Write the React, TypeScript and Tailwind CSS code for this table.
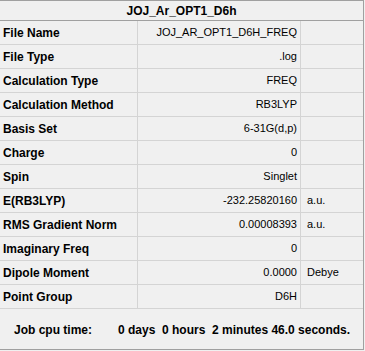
type Row = {
    label: string;
    value: string;
    unit?: string;
};

const rows: Row[] = [
    { label: "File Name", value: "JOJ_AR_OPT1_D6H_FREQ" },
    { label: "File Type", value: ".log" },
    { label: "Calculation Type", value: "FREQ" },
    { label: "Calculation Method", value: "RB3LYP" },
    { label: "Basis Set", value: "6-31G(d,p)" },
    { label: "Charge", value: "0" },
    { label: "Spin", value: "Singlet" },
    { label: "E(RB3LYP)", value: "-232.25820160", unit: "a.u." },
    { label: "RMS Gradient Norm", value: "0.00008393", unit: "a.u." },
    { label: "Imaginary Freq", value: "0" },
    { label: "Dipole Moment", value: "0.0000", unit: "Debye" },
    { label: "Point Group", value: "D6H" },
];

function SummaryRow({ label, value, unit }: Row) {
    return (
        <div className="grid grid-cols-[138px_163px_62px] h-6 border-b border-[#d4d4d4]">
            <div className="border-r border-[#d4d4d4] pl-[3px] flex items-center font-bold">
                {label}
            </div>
            <div className="border-r border-[#d4d4d4] pr-[3px] flex items-center justify-end text-[11px]">
                {value}
            </div>
            <div className="pl-[6px] flex items-center text-[11px]">{unit}</div>
        </div>
    );
}

export default function App() {
    return (
        <div className="w-[365px] h-[351px] bg-[#f0f0f0] text-black text-[12px] font-['Liberation_Sans',Arial,sans-serif]">
            <div className="w-[364px] border-t border-r border-[#a0a0a0]">
                <div className="h-5 border-b border-[#a0a0a0] flex items-center justify-center font-bold">
                    JOJ_Ar_OPT1_D6h
                </div>
                {rows.map((row) => (
                    <SummaryRow key={row.label} {...row} />
                ))}
                <div className="h-[41px] border-b border-[#a0a0a0] flex items-center font-bold pt-[2px]">
                    <span className="ml-[14px] w-[104px]">Job cpu time:</span>
                    <span className="whitespace-pre">
                        0 days  0 hours  2 minutes 46.0 seconds.
                    </span>
                </div>
            </div>
        </div>
    );
}
